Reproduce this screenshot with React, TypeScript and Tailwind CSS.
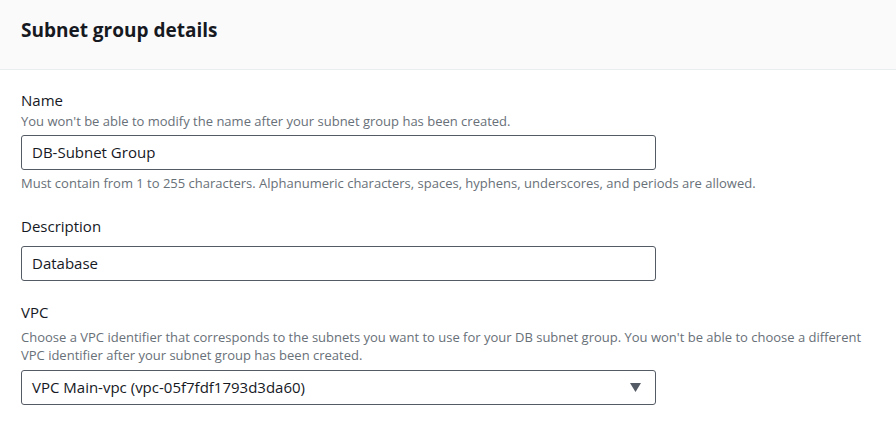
export default function App() {
  return (
    <div
      className="w-[896px] h-[426px] bg-white text-[#16191f] overflow-hidden"
      style={{ fontFamily: '"Open Sans", "Noto Sans", Arial, sans-serif' }}
    >
      {/* Header */}
      <div className="h-[70px] bg-[#fafafa] border-b border-[#eaeded] px-[21px] flex items-center">
        <h2 className="text-[19px] font-bold leading-none -mt-[8px]">Subnet group details</h2>
      </div>

      {/* Body */}
      <div className="px-[21px] pt-[20px]">
        {/* Name */}
        <div>
          <label className="block text-[15px] leading-[20px]">Name</label>
          <p className="mt-[2px] text-[13px] leading-[18px] text-[#687078]">
            You won't be able to modify the name after your subnet group has been created.
          </p>
          <div className="mt-[5px] w-[635px] h-[35px] border border-[#545b64] rounded-[3px] flex items-center px-[10px] text-[15px]">
            DB-Subnet Group
          </div>
          <p className="mt-[4px] text-[13px] leading-[18px] text-[#687078]">
            Must contain from 1 to 255 characters. Alphanumeric characters, spaces, hyphens, underscores, and periods are allowed.
          </p>
        </div>

        {/* Description */}
        <div className="mt-[24px]">
          <label className="block text-[15px] leading-[20px]">Description</label>
          <div className="mt-[10px] w-[635px] h-[35px] border border-[#545b64] rounded-[3px] flex items-center px-[10px] text-[15px]">
            Database
          </div>
        </div>

        {/* VPC */}
        <div className="mt-[21px]">
          <label className="block text-[15px] leading-[20px]">VPC</label>
          <p className="mt-[6px] text-[13px] leading-[18px] text-[#687078] w-[860px]">
            Choose a VPC identifier that corresponds to the subnets you want to use for your DB subnet group. You won't be able to choose a different VPC identifier after your subnet group has been created.
          </p>
          <div className="mt-[6px] w-[635px] h-[35px] border border-[#545b64] rounded-[3px] flex items-center justify-between pl-[10px] pr-[14px] text-[15px]">
            <span>VPC Main-vpc (vpc-05f7fdf1793d3da60)</span>
            <svg width="11" height="9" viewBox="0 0 11 9">
              <path d="M0 0 H11 L5.5 9 Z" fill="#545b64" />
            </svg>
          </div>
        </div>
      </div>
    </div>
  );
}
